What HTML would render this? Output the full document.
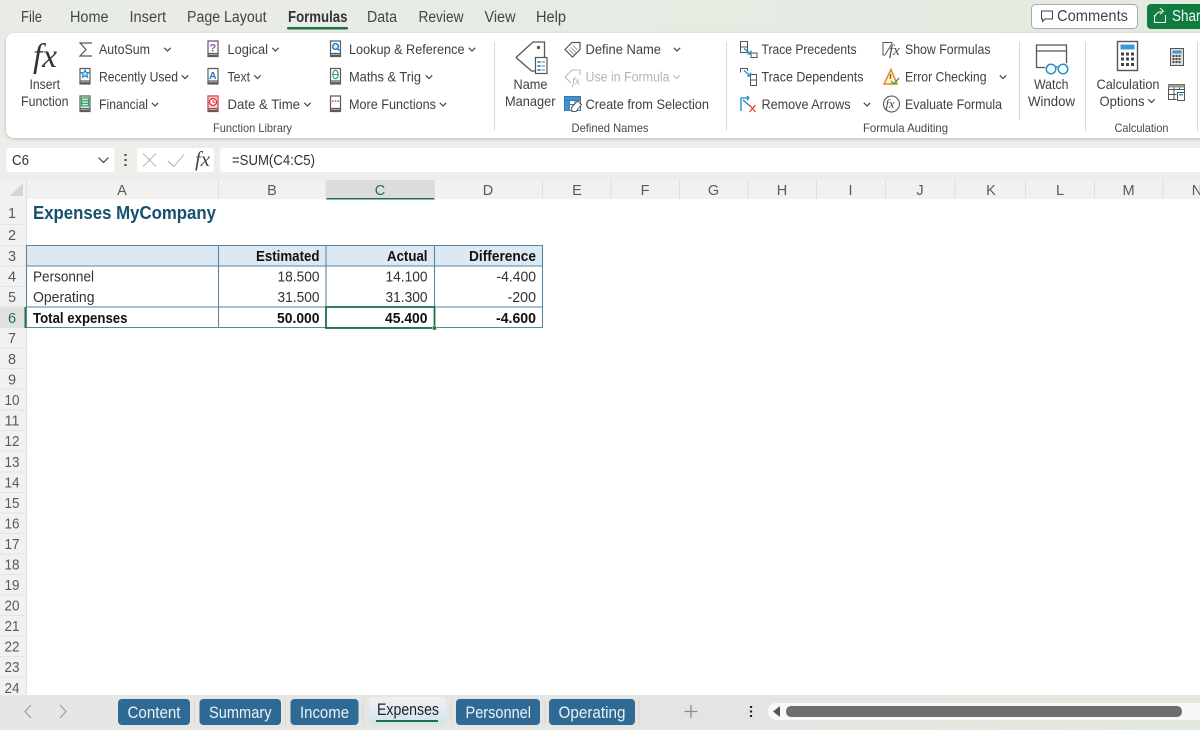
<!DOCTYPE html>
<html><head><meta charset="utf-8"><title>Expenses</title>
<style>
html,body{margin:0;padding:0;width:1200px;height:730px;overflow:hidden;background:#fff}
svg{display:block}
text{font-family:"Liberation Sans",sans-serif;fill:#404040;font-size:14px}
.t{font-size:15.500px;fill:#454545}
.g{font-size:12px;fill:#484848}
.h{font-size:14.500px;fill:#5a5a5a}
.c{font-size:14.800px;fill:#333}
.b{font-size:14.800px;font-weight:bold;fill:#111}
.s{font-size:16.500px;fill:#e9f1f6}
.sep{stroke:#d8d8d8;stroke-width:1}
</style></head><body>
<svg width="1200" height="730" viewBox="0 0 1200 730">
<defs>
<linearGradient id="top" x1="0" x2="1" y1="0" y2="0"><stop offset="0" stop-color="#e9ece6"/><stop offset="1" stop-color="#e3ebe0"/></linearGradient>
<linearGradient id="bot" x1="0" x2="1" y1="0" y2="0"><stop offset="0" stop-color="#e6e6e5"/><stop offset=".75" stop-color="#e4e5e1"/><stop offset="1" stop-color="#e2e8dc"/></linearGradient>
<linearGradient id="act" x1="0" x2="0" y1="0" y2="1"><stop offset="0" stop-color="#eef1f3"/><stop offset="1" stop-color="#d3e3ee"/></linearGradient>
<filter id="sh" x="-2%" y="-10%" width="104%" height="125%"><feDropShadow dx="0" dy="1" stdDeviation="1.500" flood-color="#000" flood-opacity=".22"/></filter>
<symbol id="book" viewBox="0 0 13 18" width="13" height="18"><path d="M1.500 1h10v12.500h-10zM1.500 1v15.500h10v-3" fill="#fff" stroke="#5c5c5c" stroke-width="1.200"/><path d="M1.500 15.500h10" stroke="#5c5c5c" stroke-width="1.800"/></symbol>
<symbol id="chev" viewBox="0 0 8 5" width="8" height="5"><path d="M.8.8 4 4l3.200-3.200" fill="none" stroke="#444" stroke-width="1.200"/></symbol>
</defs>

<rect width="1200" height="180" fill="url(#top)"/>
<rect y="138" width="1200" height="42" fill="#ebeee9"/>

<text class="t" x="21" y="22" textLength="21" lengthAdjust="spacingAndGlyphs">File</text>
<text class="t" x="70" y="22" textLength="38.500" lengthAdjust="spacingAndGlyphs">Home</text>
<text class="t" x="129.500" y="22" textLength="36.500" lengthAdjust="spacingAndGlyphs">Insert</text>
<text class="t" x="187" y="22" textLength="79.500" lengthAdjust="spacingAndGlyphs">Page Layout</text>
<text class="t" x="288" y="22" textLength="59.500" lengthAdjust="spacingAndGlyphs" style="font-weight:bold;fill:#333">Formulas</text>
<text class="t" x="367" y="22" textLength="30" lengthAdjust="spacingAndGlyphs">Data</text>
<text class="t" x="418.500" y="22" textLength="45" lengthAdjust="spacingAndGlyphs">Review</text>
<text class="t" x="484.500" y="22" textLength="31" lengthAdjust="spacingAndGlyphs">View</text>
<text class="t" x="536" y="22" textLength="30" lengthAdjust="spacingAndGlyphs">Help</text>
<rect x="287" y="27" width="61" height="2.500" rx="1" fill="#1f7246"/>

<rect x="1031.500" y="4.500" width="106" height="24" rx="4" fill="#fff" stroke="#a8a8a8"/>
<path d="M1041.500 11h11v8h-7.500l-2.500 2.500V19h-1z" fill="none" stroke="#444"/>
<text class="t" x="1057" y="21" textLength="71" lengthAdjust="spacingAndGlyphs">Comments</text>
<rect x="1147" y="4" width="70" height="25" rx="4" fill="#107c41"/>
<path d="M1154.500 15v7.500h11V15M1154.500 17c1-3 3.500-5 7-5.500M1160 8l3.500 3.200-3.500 3" fill="none" stroke="#e8f3ec" stroke-width="1.100"/>
<text class="t" x="1172" y="21" textLength="36" lengthAdjust="spacingAndGlyphs" style="fill:#f2f8f4">Share</text>

<rect x="6" y="33" width="1210" height="105" rx="8" fill="#fff" filter="url(#sh)"/>

<!-- Insert function -->
<text x="33" y="67" textLength="24" lengthAdjust="spacingAndGlyphs" style="font-family:'Liberation Serif',serif;font-style:italic;font-size:34px;fill:#333">fx</text>
<text x="29.500" y="89" textLength="30.500" lengthAdjust="spacingAndGlyphs">Insert</text>
<text x="21" y="106" textLength="47.500" lengthAdjust="spacingAndGlyphs">Function</text>

<!-- col 1 -->
<path d="M92 43H80l6 6.500-6 6.500h12" fill="none" stroke="#555" stroke-width="1.200"/>
<text x="99" y="54" textLength="51" lengthAdjust="spacingAndGlyphs">AutoSum</text>
<use href="#chev" x="163.500" y="47"/>
<use href="#book" x="78.500" y="67.500"/>
<path d="m85 70 1.200 2.400 2.700.3-2 1.800.6 2.700-2.500-1.300-2.500 1.300.6-2.700-2-1.800 2.700-.3z" fill="#bfe1f5" stroke="#1e88c9" stroke-width="1.100"/>
<text x="99" y="81.500" textLength="79" lengthAdjust="spacingAndGlyphs">Recently Used</text>
<use href="#chev" x="181" y="74.500"/>
<use href="#book" x="78.500" y="95"/>
<path d="M81.500 98h7v8h-7zM81.500 100.700h7M81.500 103.300h7" fill="#d5efdf" stroke="#2e9e5b" stroke-width="1.200"/>
<text x="99" y="109" textLength="49" lengthAdjust="spacingAndGlyphs">Financial</text>
<use href="#chev" x="151" y="102"/>

<!-- col 2 -->
<use href="#book" x="206.500" y="40"/>
<text x="209.500" y="51.500" style="font-size:11px;font-weight:bold;fill:#a349c4">?</text>
<text x="227.500" y="54" textLength="40.500" lengthAdjust="spacingAndGlyphs">Logical</text>
<use href="#chev" x="271.500" y="47"/>
<use href="#book" x="206.500" y="67.500"/>
<text x="209" y="79" style="font-size:10.500px;font-weight:bold;fill:#1e78c9">A</text>
<text x="227.500" y="81.500" textLength="22.500" lengthAdjust="spacingAndGlyphs">Text</text>
<use href="#chev" x="253.500" y="74.500"/>
<use href="#book" x="206.500" y="95"/>
<rect x="208" y="96" width="10" height="12.500" fill="#f6c9c9" stroke="#d8333a"/>
<circle cx="213" cy="102" r="3.500" fill="#fff" stroke="#d8333a" stroke-width="1.300"/>
<path d="M213 100v2.200h2" fill="none" stroke="#d8333a"/>
<text x="227.500" y="109" textLength="72.500" lengthAdjust="spacingAndGlyphs">Date &amp; Time</text>
<use href="#chev" x="303.500" y="102"/>

<!-- col 3 -->
<use href="#book" x="329" y="40"/>
<circle cx="335.500" cy="46.500" r="2.900" fill="#dbeefa" stroke="#1e78c9" stroke-width="1.400"/>
<path d="m337.500 48.500 2.200 2.200" stroke="#1e78c9" stroke-width="1.400"/>
<text x="349" y="54" textLength="115.500" lengthAdjust="spacingAndGlyphs">Lookup &amp; Reference</text>
<use href="#chev" x="468" y="47"/>
<use href="#book" x="329" y="67.500"/>
<ellipse cx="335.500" cy="74.500" rx="2.700" ry="4.200" fill="none" stroke="#2e9e72" stroke-width="1.200"/>
<path d="M333 74.500h5" stroke="#2e9e72"/>
<text x="349" y="81.500" textLength="72" lengthAdjust="spacingAndGlyphs">Maths &amp; Trig</text>
<use href="#chev" x="425" y="74.500"/>
<use href="#book" x="329" y="95"/>
<path d="M332 101h1.500M334.800 101h1.500M337.600 101h1.500" stroke="#d8333a" stroke-width="1.600"/>
<text x="349" y="109" textLength="87" lengthAdjust="spacingAndGlyphs">More Functions</text>
<use href="#chev" x="439" y="102"/>

<text class="g" x="213" y="132" textLength="79" lengthAdjust="spacingAndGlyphs">Function Library</text>
<line class="sep" x1="494.500" y1="42" x2="494.500" y2="131"/>

<!-- Defined names -->
<path d="M516 57.500 533 42h11.500v16M516 57.500 531.500 71h4" fill="none" stroke="#555" stroke-width="1.300"/>
<circle cx="538.500" cy="47.500" r="1.600" fill="#555"/>
<rect x="535.500" y="57.500" width="11.500" height="16" fill="#fff" stroke="#555" stroke-width="1.200"/>
<path d="M537.500 62h3M537.500 66h3M537.500 70h3" stroke="#1e88c9" stroke-width="1.800"/>
<path d="M541.500 62h3.500M541.500 66h3.500M541.500 70h3.500" stroke="#777"/>
<text x="513.500" y="89" textLength="34" lengthAdjust="spacingAndGlyphs">Name</text>
<text x="505" y="106" textLength="50.500" lengthAdjust="spacingAndGlyphs">Manager</text>

<path d="m565 49.500 7-7h8v7l-7.500 7.500z" fill="none" stroke="#555" stroke-width="1.200"/>
<path d="m569 49.500 5 5M571 47.500l5 5M573 45.500l4 4" stroke="#777" stroke-width=".8"/>
<text x="585.500" y="54" textLength="75.500" lengthAdjust="spacingAndGlyphs">Define Name</text>
<use href="#chev" x="673" y="47"/>
<path d="m565 77 7-7h8v5M565 77l6 6" fill="none" stroke="#bbb" stroke-width="1.100"/>
<text x="572" y="84.500" style="font-family:'Liberation Serif',serif;font-style:italic;font-size:11px;fill:#aaa">fx</text>
<text x="585.500" y="81.500" textLength="84" lengthAdjust="spacingAndGlyphs" style="fill:#b4b4b4">Use in Formula</text>
<use href="#chev" x="672.500" y="74.500" opacity=".35"/>
<rect x="564.500" y="96.500" width="16" height="14" fill="#fff" stroke="#2f79b5"/>
<path d="M564.500 100.500h16M569.500 96.500v14M575 96.500v8M564.500 104.500h16" stroke="#2f79b5"/>
<rect x="565" y="97" width="15" height="3" fill="#4a90c8"/>
<rect x="565" y="100.500" width="4.500" height="10" fill="#4a90c8"/>
<path d="m571.500 107.500 6-6.500 4 3.500-5.500 7h-4z" fill="#fff" stroke="#555"/>
<text x="585.500" y="109" textLength="123.500" lengthAdjust="spacingAndGlyphs">Create from Selection</text>
<text class="g" x="571.500" y="132" textLength="77" lengthAdjust="spacingAndGlyphs">Defined Names</text>
<line class="sep" x1="726.500" y1="42" x2="726.500" y2="131"/>

<!-- auditing -->
<rect x="740.500" y="41.500" width="7" height="5.500" fill="none" stroke="#555"/><rect x="740.500" y="47" width="7" height="5.500" fill="none" stroke="#555"/>
<path d="M751 53v4.500h6V53z" fill="none" stroke="#555"/>
<path d="m744 48.500 7 5.500M751 50.500V54h-3.500" fill="none" stroke="#1e88c9" stroke-width="1.300"/>
<text x="761.500" y="54" textLength="95" lengthAdjust="spacingAndGlyphs">Trace Precedents</text>
<path d="M740.500 72.500v-4h7V71" fill="none" stroke="#555"/>
<rect x="750.500" y="74.500" width="6" height="5.500" fill="none" stroke="#555"/><rect x="750.500" y="80" width="6" height="5.500" fill="none" stroke="#555"/>
<path d="m744 70.500 6.500 5.500M750.500 72.500V76H747" fill="none" stroke="#1e88c9" stroke-width="1.300"/>
<text x="761.500" y="81.500" textLength="102" lengthAdjust="spacingAndGlyphs">Trace Dependents</text>
<path d="M741 111V98h8M749 98l-2-2M749 98l-2 2M743 100l7 6" fill="none" stroke="#1e88c9" stroke-width="1.300"/>
<path d="m749.500 105 6 7M755.500 105l-6 7" stroke="#e0433a" stroke-width="1.300"/>
<text x="761.500" y="109" textLength="89" lengthAdjust="spacingAndGlyphs">Remove Arrows</text>
<use href="#chev" x="863" y="102"/>

<path d="M883 42.500h9v1L885 55h-2z" fill="none" stroke="#555"/>
<text x="889" y="55" style="font-family:'Liberation Serif',serif;font-style:italic;font-size:15px;fill:#444">fx</text>
<text x="905" y="54" textLength="85.500" lengthAdjust="spacingAndGlyphs">Show Formulas</text>
<path d="M891 69.500 884 84h13z" fill="#fff3dc" stroke="#e28a1d" stroke-width="1.500"/>
<path d="M890.500 74v5" stroke="#8a5a20" stroke-width="1.400"/>
<path d="m891 81 3 3 5-6" fill="none" stroke="#3aa55c" stroke-width="1.400"/>
<text x="905" y="81.500" textLength="81.500" lengthAdjust="spacingAndGlyphs">Error Checking</text>
<use href="#chev" x="999" y="74.500"/>
<circle cx="891.500" cy="104" r="8" fill="none" stroke="#555" stroke-width="1.100"/>
<text x="885.500" y="108" style="font-family:'Liberation Serif',serif;font-style:italic;font-size:12.500px;fill:#444">fx</text>
<text x="905" y="109" textLength="97" lengthAdjust="spacingAndGlyphs">Evaluate Formula</text>
<text class="g" x="863" y="132" textLength="85" lengthAdjust="spacingAndGlyphs">Formula Auditing</text>
<line class="sep" x1="1019.500" y1="42" x2="1019.500" y2="120"/>

<!-- watch -->
<path d="M1045 67.500h-8.500v-22.500h30v18" fill="none" stroke="#555" stroke-width="1.300"/>
<path d="M1036.500 51h30" stroke="#555" stroke-width="1.200"/>
<circle cx="1051" cy="69" r="4.800" fill="#fff" stroke="#2a90d0" stroke-width="1.500"/><circle cx="1063" cy="69" r="4.800" fill="#fff" stroke="#2a90d0" stroke-width="1.500"/>
<path d="M1055 67.500c1-1 3-1 4 0M1046.500 68l2.500-4M1067.500 68l-2.500-4" fill="none" stroke="#2a90d0" stroke-width="1.300"/>
<text x="1034" y="89" textLength="34.500" lengthAdjust="spacingAndGlyphs">Watch</text>
<text x="1028" y="106" textLength="47" lengthAdjust="spacingAndGlyphs">Window</text>
<line class="sep" x1="1085.500" y1="42" x2="1085.500" y2="131"/>

<!-- calc -->
<rect x="1117.500" y="41.500" width="20" height="29" fill="#fff" stroke="#555" stroke-width="1.400"/>
<rect x="1120.500" y="44.500" width="14" height="5" fill="#3f98d6"/>
<path d="M1121 54h3M1126 54h3M1131 54h3M1121 59h3M1126 59h3M1131 59h3M1121 64.500h3M1126 64.500h3M1131 64.500h3" stroke="#444" stroke-width="3"/>
<text x="1096.500" y="89" textLength="63" lengthAdjust="spacingAndGlyphs">Calculation</text>
<text x="1099.500" y="106" textLength="45" lengthAdjust="spacingAndGlyphs">Options</text>
<use href="#chev" x="1147.500" y="98.500"/>
<rect x="1170.500" y="48.500" width="13" height="17" fill="#ddd" stroke="#555"/>
<rect x="1172.500" y="50.500" width="9" height="3" fill="#3f98d6"/>
<path d="M1172.500 56h9M1172.500 59h9M1172.500 62h9" stroke="#333" stroke-width="1.800" stroke-dasharray="2 1"/>
<path d="M1168.500 84.500h16v8M1168.500 84.500v15h8M1168.500 89.500h16M1168.500 94.500h8M1174 84.500v15M1179.500 84.500v5" fill="none" stroke="#555"/>
<rect x="1168.500" y="84.500" width="16" height="3" fill="#999"/>
<rect x="1177.500" y="92.500" width="7" height="8" fill="#fff" stroke="#555"/>
<rect x="1179" y="94" width="4" height="1.500" fill="#3f98d6"/>
<text class="g" x="1114.500" y="132" textLength="54" lengthAdjust="spacingAndGlyphs">Calculation</text>
<line class="sep" x1="1197.500" y1="42" x2="1197.500" y2="131"/>

<!-- formula bar -->
<rect x="6.500" y="148" width="108" height="24" rx="3" fill="#fff"/>
<text x="12" y="165" textLength="17" lengthAdjust="spacingAndGlyphs" style="font-size:14.500px;fill:#333">C6</text>
<path d="m98.500 157.500 5 5 5-5" fill="none" stroke="#444" stroke-width="1.200"/>
<path d="M125.500 154v2M125.500 159v2M125.500 164v2" stroke="#444" stroke-width="2"/>
<rect x="137" y="148" width="77" height="24" rx="3" fill="#fff"/>
<path d="m143 153.500 13 13M156 153.500l-13 13" stroke="#bdbdbd" stroke-width="1.200"/>
<path d="m168 161 6 5.500 10-12" fill="none" stroke="#bdbdbd" stroke-width="1.200"/>
<text x="195" y="166" textLength="15" lengthAdjust="spacingAndGlyphs" style="font-family:'Liberation Serif',serif;font-style:italic;font-size:21px;fill:#444">fx</text>
<rect x="220" y="148" width="990" height="24" rx="3" fill="#fff"/>
<text x="232" y="165" textLength="83" lengthAdjust="spacingAndGlyphs" style="font-size:14.500px;fill:#333">=SUM(C4:C5)</text>

<!-- sheet -->
<rect y="180" width="1200" height="515" fill="#fff"/>
<rect y="180" width="1200" height="19" fill="#f1f1f1"/>
<rect y="199" width="26" height="496" fill="#f1f1f1"/>
<rect x="326" y="180" width="108.500" height="19" fill="#dcdcdc"/>
<rect x="326" y="198" width="109" height="1.500" fill="#1f7246"/>
<path d="M23 183v13H10z" fill="#d4d4d4"/>
<path d="M26.500 180v515M218.500 180v19M326 180v19M434.500 180v19M542.500 180v19M611 180v19M679.500 180v19M748 180v19M816.500 180v19M885.500 180v19M955 180v19M1025.500 180v19M1094.500 180v19M1163 180v19" stroke="#e0e0e0"/>
<path d="M0 224.500h26M0 245.500h26M0 266h26M0 286.500h26M0 307h26M0 327.500h26M0 348h26M0 368.500h26M0 389h26M0 410h26M0 430.500h26M0 451h26M0 472h26M0 492.500h26M0 513h26M0 533.500h26M0 554h26M0 574.500h26M0 595h26M0 615.500h26M0 636h26M0 656.500h26M0 677h26" stroke="#e4e4e4"/>
<rect y="307.500" width="26" height="20.500" fill="#e0e0e0"/>
<rect x="24.500" y="307" width="2" height="21" fill="#1f7246"/>

<g text-anchor="middle">
<text class="h" x="122" y="195">A</text><text class="h" x="272" y="195">B</text><text class="h" x="380" y="195" style="fill:#1f7246">C</text><text class="h" x="488" y="195">D</text><text class="h" x="577" y="195">E</text><text class="h" x="645" y="195">F</text><text class="h" x="713.500" y="195">G</text><text class="h" x="782" y="195">H</text><text class="h" x="850.500" y="195">I</text><text class="h" x="920" y="195">J</text><text class="h" x="991" y="195">K</text><text class="h" x="1060" y="195">L</text><text class="h" x="1128.500" y="195">M</text><text class="h" x="1197" y="195">N</text>
<text class="h" x="12" y="218">1</text><text class="h" x="12" y="240">2</text><text class="h" x="12" y="261">3</text><text class="h" x="12" y="281.500">4</text><text class="h" x="12" y="302">5</text><text class="h" x="12" y="323" style="fill:#1f7246">6</text><text class="h" x="12" y="343">7</text><text class="h" x="12" y="364">8</text><text class="h" x="12" y="384.500">9</text><text class="h" x="12" y="405" textLength="15" lengthAdjust="spacingAndGlyphs">10</text><text class="h" x="12" y="425.500" textLength="15" lengthAdjust="spacingAndGlyphs">11</text><text class="h" x="12" y="446" textLength="15" lengthAdjust="spacingAndGlyphs">12</text><text class="h" x="12" y="467" textLength="15" lengthAdjust="spacingAndGlyphs">13</text><text class="h" x="12" y="487.500" textLength="15" lengthAdjust="spacingAndGlyphs">14</text><text class="h" x="12" y="508" textLength="15" lengthAdjust="spacingAndGlyphs">15</text><text class="h" x="12" y="528.500" textLength="15" lengthAdjust="spacingAndGlyphs">16</text><text class="h" x="12" y="549" textLength="15" lengthAdjust="spacingAndGlyphs">17</text><text class="h" x="12" y="569.500" textLength="15" lengthAdjust="spacingAndGlyphs">18</text><text class="h" x="12" y="590" textLength="15" lengthAdjust="spacingAndGlyphs">19</text><text class="h" x="12" y="610.500" textLength="15" lengthAdjust="spacingAndGlyphs">20</text><text class="h" x="12" y="631" textLength="15" lengthAdjust="spacingAndGlyphs">21</text><text class="h" x="12" y="651.500" textLength="15" lengthAdjust="spacingAndGlyphs">22</text><text class="h" x="12" y="672" textLength="15" lengthAdjust="spacingAndGlyphs">23</text><text class="h" x="12" y="693" textLength="15" lengthAdjust="spacingAndGlyphs">24</text>
</g>

<text x="33" y="219" textLength="183" lengthAdjust="spacingAndGlyphs" style="font-size:18px;font-weight:bold;fill:#174f6e">Expenses MyCompany</text>

<rect x="26.500" y="245.500" width="516" height="20.500" fill="#dce9f3"/>
<path d="M26.500 245.500h516v82h-516zM26.500 266h516M26.500 307h516M218.500 245.500v82M326 245.500v82M434.500 245.500v82" fill="none" stroke="#5a879f" stroke-width="1.100"/>

<text class="b" x="256" y="261" textLength="63.500" lengthAdjust="spacingAndGlyphs">Estimated</text>
<text class="b" x="387" y="261" textLength="40.500" lengthAdjust="spacingAndGlyphs">Actual</text>
<text class="b" x="469" y="261" textLength="67" lengthAdjust="spacingAndGlyphs">Difference</text>

<text class="c" x="33" y="281.500" textLength="61" lengthAdjust="spacingAndGlyphs">Personnel</text>
<text class="c" x="277.500" y="281.500" textLength="42" lengthAdjust="spacingAndGlyphs">18.500</text>
<text class="c" x="385.500" y="281.500" textLength="42" lengthAdjust="spacingAndGlyphs">14.100</text>
<text class="c" x="496.500" y="281.500" textLength="39.500" lengthAdjust="spacingAndGlyphs">-4.400</text>

<text class="c" x="33" y="302" textLength="61.500" lengthAdjust="spacingAndGlyphs">Operating</text>
<text class="c" x="277.500" y="302" textLength="42" lengthAdjust="spacingAndGlyphs">31.500</text>
<text class="c" x="385.500" y="302" textLength="42" lengthAdjust="spacingAndGlyphs">31.300</text>
<text class="c" x="507.500" y="302" textLength="28.500" lengthAdjust="spacingAndGlyphs">-200</text>

<text class="b" x="33" y="323" textLength="94.500" lengthAdjust="spacingAndGlyphs">Total expenses</text>
<text class="b" x="277" y="323" textLength="42.500" lengthAdjust="spacingAndGlyphs">50.000</text>
<text class="b" x="385" y="323" textLength="42.500" lengthAdjust="spacingAndGlyphs">45.400</text>
<text class="b" x="496" y="323" textLength="40" lengthAdjust="spacingAndGlyphs">-4.600</text>

<rect x="326" y="307" width="108.500" height="21" fill="none" stroke="#1f7246" stroke-width="1.800"/>
<rect x="432.500" y="326" width="4" height="4" fill="#1f7246" stroke="#fff" stroke-width=".5"/>

<!-- bottom -->
<rect y="695" width="1200" height="35" fill="url(#bot)"/>
<path d="m31 705-6 6.500 6 6.500M60 705l6 6.500-6 6.500" fill="none" stroke="#9a9a9a" stroke-width="1.100"/>
<g fill="#2e6a94">
<rect x="118" y="699" width="72" height="26" rx="4"/>
<rect x="199.500" y="699" width="81.500" height="26" rx="4"/>
<rect x="290.500" y="699" width="68" height="26" rx="4"/>
<rect x="369" y="697" width="77" height="28" rx="4" fill="url(#act)"/>
<rect x="456" y="699" width="84" height="26" rx="4"/>
<rect x="549" y="699" width="86" height="26" rx="4"/>
</g>
<text class="s" x="127.500" y="718" textLength="53" lengthAdjust="spacingAndGlyphs">Content</text>
<text class="s" x="209" y="718" textLength="62.500" lengthAdjust="spacingAndGlyphs">Summary</text>
<text class="s" x="300" y="718" textLength="49" lengthAdjust="spacingAndGlyphs">Income</text>
<text class="s" x="377" y="715" textLength="62" lengthAdjust="spacingAndGlyphs" style="fill:#222">Expenses</text>
<rect x="376" y="720" width="62" height="2" fill="#1f7246"/>
<text class="s" x="465.500" y="718" textLength="65.500" lengthAdjust="spacingAndGlyphs">Personnel</text>
<text class="s" x="558.500" y="718" textLength="67" lengthAdjust="spacingAndGlyphs">Operating</text>
<path d="M194.500 700v24M285.500 700v24M363 700v24M451 700v24M545 700v24M639 700v24" stroke="#d8d8d8"/>
<path d="M691 705v13M684.500 711.500h13" stroke="#8c8c8c" stroke-width="1.300"/>
<path d="M751 706v2M751 710.500v2M751 715v2" stroke="#222" stroke-width="2.200"/>
<rect x="768" y="703" width="440" height="17" rx="8" fill="#f8f8f8"/>
<path d="m780 706-7 5.500 7 5.500z" fill="#555"/>
<rect x="786" y="706" width="396" height="11" rx="5" fill="#6e6e6e"/>
</svg>
</body></html>
